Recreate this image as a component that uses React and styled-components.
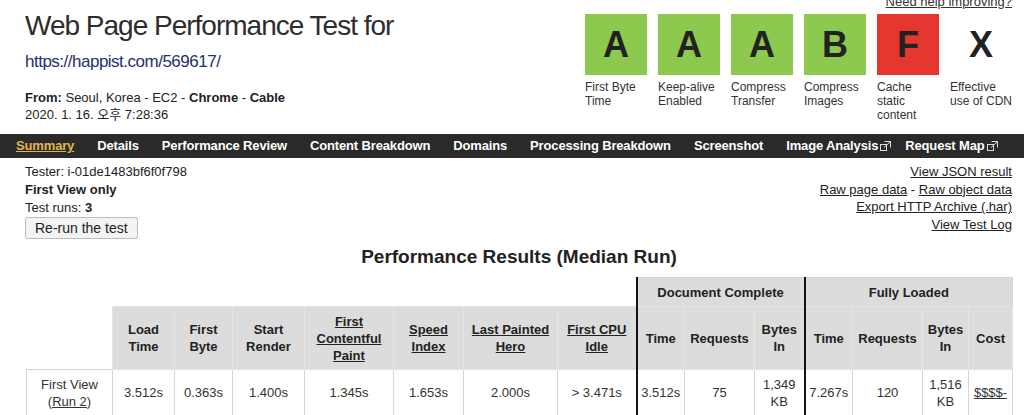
import React from 'react';
import styled, { createGlobalStyle } from 'styled-components';

const Global = createGlobalStyle`
  html, body { margin: 0; padding: 0; background: #fff; }
  body {
    font-family: "Liberation Sans", Arial, "Noto Sans CJK KR", sans-serif;
    color: #222;
    overflow: hidden;
  }
`;

const Header = styled.header`
  display: flex;
  justify-content: space-between;
  align-items: flex-start;
  padding: 0 12px 0 25px;
`;

const Intro = styled.div`
  margin-top: 10px;
`;

const Title = styled.h1`
  margin: 0;
  font-size: 28px;
  line-height: 32px;
  font-weight: 400;
  letter-spacing: -1px;
  color: #2d2d2d;
`;

const UrlLink = styled.a`
  display: block;
  margin-top: 10px;
  font-size: 17px;
  line-height: 20px;
  letter-spacing: -0.5px;
  color: #27306a;
  text-decoration: none;
`;

const Meta = styled.div`
  margin-top: 17px;
  font-size: 13px;
  line-height: 17px;
  color: #222;
`;

const GradeColumn = styled.div`
  display: flex;
  flex-direction: column;
  align-items: flex-end;
  margin-top: -6px;
`;

const HelpLink = styled.a`
  font-size: 13px;
  line-height: 15px;
  color: #333;
  text-decoration: underline;
`;

const GradeRow = styled.div`
  display: flex;
  gap: 11px;
  margin-top: 5px;
`;

const Grade = styled.div`
  width: 62px;
  display: flex;
  flex-direction: column;
`;

const GradeBox = styled.div`
  height: 61px;
  display: flex;
  align-items: center;
  justify-content: center;
  background: ${(p) => p.$bg};
  font-size: 36px;
  font-weight: 700;
  color: #222;
`;

const GradeLabel = styled.div`
  margin-top: 5px;
  font-size: 12px;
  line-height: 14px;
  white-space: nowrap;
  color: #333;
`;

const Nav = styled.nav`
  margin-top: 11px;
  height: 24px;
  background: #2a2a2a;
  display: flex;
  align-items: center;
  gap: 23px;
  padding-left: 16px;
`;

const NavItem = styled.a`
  display: inline-flex;
  align-items: center;
  gap: 2px;
  margin-right: ${(p) => (p.$ext ? '-9px' : '0')};
  font-size: 13px;
  font-weight: 700;
  line-height: 24px;
  letter-spacing: -0.15px;
  white-space: nowrap;
  color: ${(p) => (p.$active ? '#e0b64c' : '#fff')};
  text-decoration: ${(p) => (p.$active ? 'underline' : 'none')};
`;

const Info = styled.section`
  display: flex;
  justify-content: space-between;
  padding: 5px 12px 0 25px;
  font-size: 13px;
  line-height: 18px;
  color: #222;
`;

const Lines = styled.div`
  display: flex;
  flex-direction: column;
  align-items: flex-start;
`;

const RerunButton = styled.button`
  height: 22px;
  padding: 0 9px;
  font-family: inherit;
  font-size: 14px;
  background: #f3f3f3;
  border: 1px solid #bdbdbd;
  border-radius: 2px;
  color: #222;
`;

const LinksCol = styled.div`
  text-align: right;
  line-height: 17.5px;
`;

const PlainLink = styled.a`
  color: #222;
  text-decoration: underline;
`;

const Results = styled.section`
  padding: 0 12px 0 26px;
`;

const ResultsTitle = styled.h2`
  margin: 6px 0 8px;
  text-align: center;
  font-size: 19px;
  line-height: 24px;
  font-weight: 700;
  color: #222;
`;

const Table = styled.table`
  width: 986px;
  table-layout: fixed;
  border-collapse: collapse;
  font-size: 13px;
`;

const BlankCell = styled.th`
  border: none;
  padding: 0;
`;

const GroupHead = styled.th`
  height: 28px;
  padding: 0;
  background: #dcdcdc;
  border-top: 1px solid #d4d4d4;
  border-right: 1px solid #d4d4d4;
  border-left: 2px solid #141414;
  font-weight: 700;
  color: #222;
`;

const HeadCell = styled.th`
  height: 62px;
  padding: 0 4px;
  background: #dcdcdc;
  border: 1px solid #e4e4e4;
  border-left: ${(p) => (p.$thick ? '2px solid #141414' : '1px solid #e4e4e4')};
  font-weight: 700;
  line-height: 17px;
  color: #222;
`;

const HeadLink = styled.a`
  color: #222;
  text-decoration: underline;
`;

const DataCell = styled.td`
  height: 45px;
  padding: 0 3px;
  text-align: center;
  line-height: 17px;
  color: #333;
  border: 1px solid #d6d6d6;
  border-left: ${(p) => (p.$thick ? '2px solid #141414' : '1px solid #d6d6d6')};
`;

const DataLink = styled.a`
  color: #333;
  text-decoration: underline;
`;

const ExtIcon = () => (
  <svg width="11" height="10" viewBox="0 0 11 10" fill="none" stroke="#ddd" strokeWidth="1">
    <rect x="0.5" y="3.5" width="6" height="6" />
    <path d="M4.5 0.5h6v6" />
    <path d="M4 6.5L10.5 0.5" />
  </svg>
);

const grades = [
  { letter: 'A', bg: '#8dc84f', label: ['First Byte', 'Time'] },
  { letter: 'A', bg: '#8dc84f', label: ['Keep-alive', 'Enabled'] },
  { letter: 'A', bg: '#8dc84f', label: ['Compress', 'Transfer'] },
  { letter: 'B', bg: '#8dc84f', label: ['Compress', 'Images'] },
  { letter: 'F', bg: '#e5362f', label: ['Cache', 'static', 'content'] },
  { letter: 'X', bg: 'transparent', label: ['Effective', 'use of CDN'] },
];

const navItems = [
  { text: 'Summary', active: true },
  { text: 'Details' },
  { text: 'Performance Review' },
  { text: 'Content Breakdown' },
  { text: 'Domains' },
  { text: 'Processing Breakdown' },
  { text: 'Screenshot' },
  { text: 'Image Analysis', ext: true },
  { text: 'Request Map', ext: true },
];

const colWidths = [86, 62, 58, 72, 89, 70, 94, 79, 48, 70, 50, 48, 70, 46, 44];

export default function App() {
  return (
    <>
      <Global />
      <Header>
        <Intro>
          <Title>Web Page Performance Test for</Title>
          <UrlLink href="#">https://happist.com/569617/</UrlLink>
          <Meta>
            <b>From:</b> Seoul, Korea - EC2 - <b>Chrome</b> - <b>Cable</b>
            <br />
            2020. 1. 16. 오후 7:28:36
          </Meta>
        </Intro>
        <GradeColumn>
          <HelpLink href="#">Need help improving?</HelpLink>
          <GradeRow>
            {grades.map((g, i) => (
              <Grade key={i}>
                <GradeBox $bg={g.bg}>{g.letter}</GradeBox>
                <GradeLabel>
                  {g.label.map((l, j) => (
                    <React.Fragment key={j}>
                      {j > 0 && <br />}
                      {l}
                    </React.Fragment>
                  ))}
                </GradeLabel>
              </Grade>
            ))}
          </GradeRow>
        </GradeColumn>
      </Header>

      <Nav>
        {navItems.map((n) => (
          <NavItem key={n.text} href="#" $active={n.active} $ext={n.ext}>
            {n.text}
            {n.ext && <ExtIcon />}
          </NavItem>
        ))}
      </Nav>

      <Info>
        <Lines>
          <span>Tester: i-01de1483bf6f0f798</span>
          <b>First View only</b>
          <span>
            Test runs: <b>3</b>
          </span>
          <RerunButton>Re-run the test</RerunButton>
        </Lines>
        <LinksCol>
          <PlainLink href="#">View JSON result</PlainLink>
          <br />
          <PlainLink href="#">Raw page data</PlainLink> - <PlainLink href="#">Raw object data</PlainLink>
          <br />
          <PlainLink href="#">Export HTTP Archive (.har)</PlainLink>
          <br />
          <PlainLink href="#">View Test Log</PlainLink>
        </LinksCol>
      </Info>

      <Results>
        <ResultsTitle>Performance Results (Median Run)</ResultsTitle>
        <Table>
          <colgroup>
            {colWidths.map((w, i) => (
              <col key={i} style={{ width: w }} />
            ))}
          </colgroup>
          <thead>
            <tr>
              <BlankCell colSpan={8} />
              <GroupHead colSpan={3}>Document Complete</GroupHead>
              <GroupHead colSpan={4}>Fully Loaded</GroupHead>
            </tr>
            <tr>
              <BlankCell />
              <HeadCell>Load<br />Time</HeadCell>
              <HeadCell>First<br />Byte</HeadCell>
              <HeadCell>Start<br />Render</HeadCell>
              <HeadCell><HeadLink href="#">First Contentful Paint</HeadLink></HeadCell>
              <HeadCell><HeadLink href="#">Speed Index</HeadLink></HeadCell>
              <HeadCell><HeadLink href="#">Last Painted Hero</HeadLink></HeadCell>
              <HeadCell><HeadLink href="#">First CPU Idle</HeadLink></HeadCell>
              <HeadCell $thick>Time</HeadCell>
              <HeadCell>Requests</HeadCell>
              <HeadCell>Bytes<br />In</HeadCell>
              <HeadCell $thick>Time</HeadCell>
              <HeadCell>Requests</HeadCell>
              <HeadCell>Bytes<br />In</HeadCell>
              <HeadCell>Cost</HeadCell>
            </tr>
          </thead>
          <tbody>
            <tr>
              <DataCell>
                First View
                <br />(<DataLink href="#">Run 2</DataLink>)
              </DataCell>
              <DataCell>3.512s</DataCell>
              <DataCell>0.363s</DataCell>
              <DataCell>1.400s</DataCell>
              <DataCell>1.345s</DataCell>
              <DataCell>1.653s</DataCell>
              <DataCell>2.000s</DataCell>
              <DataCell>&gt; 3.471s</DataCell>
              <DataCell $thick>3.512s</DataCell>
              <DataCell>75</DataCell>
              <DataCell>1,349<br />KB</DataCell>
              <DataCell $thick>7.267s</DataCell>
              <DataCell>120</DataCell>
              <DataCell>1,516<br />KB</DataCell>
              <DataCell><DataLink href="#">$$$$-</DataLink></DataCell>
            </tr>
          </tbody>
        </Table>
      </Results>
    </>
  );
}
